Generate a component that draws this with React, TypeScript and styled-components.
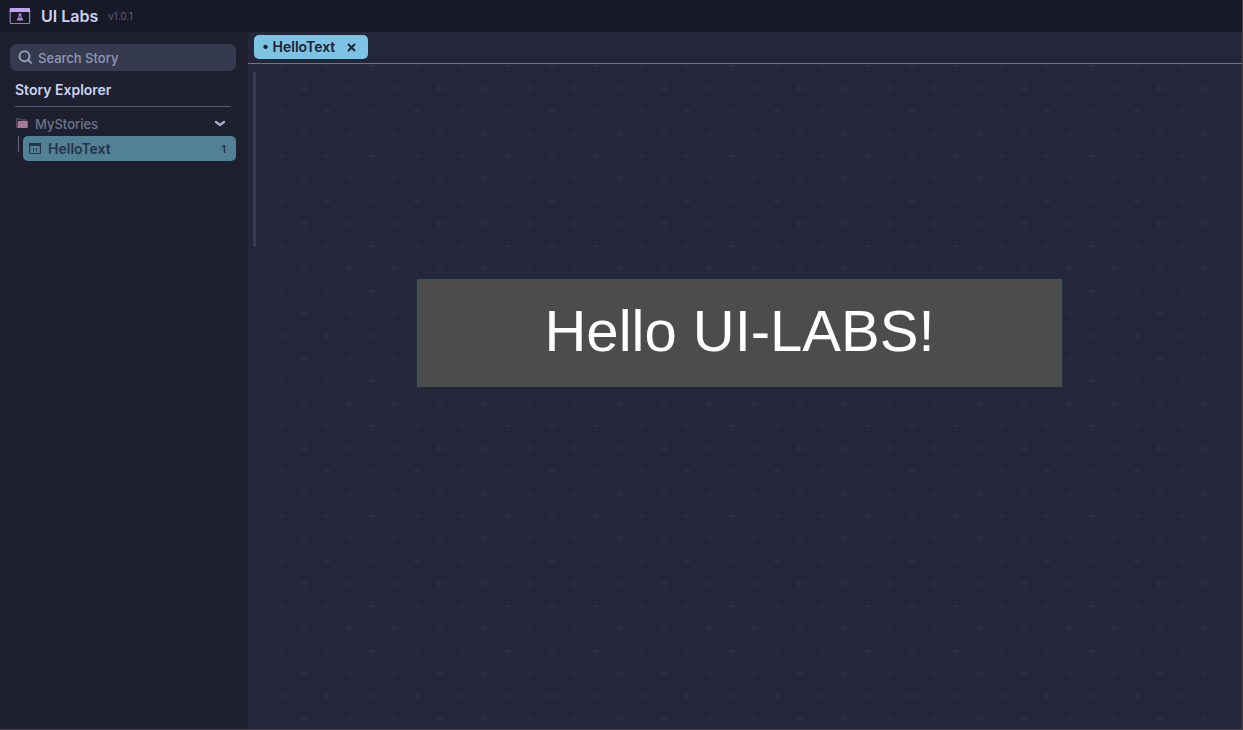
import React from 'react';
import styled, { createGlobalStyle } from 'styled-components';

const Global = createGlobalStyle`
  * { box-sizing: border-box; }
  body { margin: 0; background: #24273a; font-family: Inter, 'Liberation Sans', sans-serif; }
  button, input { font: inherit; border: 0; margin: 0; }
  button { cursor: pointer; }
`;

const Window = styled.div`
  min-height: 100vh;
  display: flex;
  flex-direction: column;
  border-right: 1px solid #474348;
  border-bottom: 1px solid #474348;
`;

const TitleBar = styled.header`
  height: 32px;
  flex: none;
  display: flex;
  align-items: center;
  padding: 0 9px;
  background: #181926;
`;

const AppName = styled.h1`
  margin: 0 10px;
  font-size: 16px;
  line-height: 20px;
  font-weight: 600;
  color: #cad3f5;
`;

const Version = styled.span`
  font-size: 10px;
  line-height: 20px;
  color: #5e6178;
`;

const Body = styled.div`
  flex: 1;
  display: flex;
`;

const Sidebar = styled.aside`
  width: 248px;
  flex: none;
  padding: 12px 12px 12px 10px;
  background: #1e2030;
`;

const SearchBox = styled.label`
  height: 27px;
  display: flex;
  align-items: center;
  gap: 5px;
  padding: 0 8px;
  border-radius: 7px;
  background: #363a4f;
`;

const SearchInput = styled.input`
  flex: 1;
  min-width: 0;
  padding: 0;
  background: transparent;
  outline: none;
  font-size: 13px;
  line-height: 20px;
  font-weight: 500;
  color: #cad3f5;
  &::placeholder { color: #9298b6; opacity: 1; }
`;

const SectionTitle = styled.h2`
  height: 36px;
  margin: 0 5px 4px;
  padding-top: 9px;
  border-bottom: 1px solid #55586e;
  font-size: 14px;
  line-height: 20px;
  font-weight: 600;
  color: #cad3f5;
`;

const Folder = styled.button`
  width: 100%;
  height: 25px;
  display: flex;
  align-items: center;
  gap: 7px;
  padding: 0 10px 0 6px;
  background: transparent;
  font-size: 13px;
  line-height: 20px;
  font-weight: 500;
  color: #6e738d;
`;

const Label = styled.span`
  flex: 1;
  text-align: left;
`;

const Branch = styled.div`
  display: flex;
  gap: 4px;
  padding-left: 8px;
`;

const BranchLine = styled.div`
  width: 1px;
  height: 16px;
  background: #62657c;
`;

const Story = styled.button`
  flex: 1;
  height: 25px;
  display: flex;
  align-items: center;
  gap: 7px;
  padding: 0 10px 0 6px;
  border-radius: 5px;
  background: #528195;
  font-size: 14px;
  line-height: 20px;
  font-weight: 600;
  color: #273447;
`;

const Count = styled.span`
  font-size: 11px;
`;

const Main = styled.main`
  flex: 1;
  min-width: 0;
  display: flex;
  flex-direction: column;
  background: #24273a;
`;

const Tabs = styled.nav`
  height: 32px;
  flex: none;
  padding: 3px 6px;
  border-bottom: 1px solid #6e738d;
`;

const Tab = styled.div`
  width: 114px;
  height: 24px;
  display: flex;
  align-items: center;
  justify-content: space-between;
  padding: 0 11px 0 8px;
  border-radius: 5px;
  background: #7dc4e4;
  color: #1e2030;
`;

const TabName = styled.button`
  padding: 0;
  background: transparent;
  font-size: 14px;
  line-height: 20px;
  font-weight: 600;
  white-space: pre;
  color: inherit;
`;

const Close = styled.button`
  display: flex;
  padding: 0;
  background: transparent;
  color: inherit;
`;

const Canvas = styled.section`
  flex: 1;
  position: relative;
  display: flex;
  align-items: flex-start;
  padding: 8px 19px 8px 5px;
`;

const Backdrop = styled.svg`
  position: absolute;
  inset: 0;
  width: 100%;
  height: 100%;
  mask-image: linear-gradient(to right, transparent, #000 36px, #000 calc(100% - 36px), transparent);
`;

const Handle = styled.div`
  position: relative;
  width: 3px;
  height: 175px;
  background: #363a4f;
`;

const Stage = styled.div`
  position: relative;
  flex: 1;
  display: flex;
  justify-content: center;
  padding-top: 207px;
`;

const Hello = styled.div`
  width: 645px;
  max-width: 90%;
  padding: 18px 0 22px;
  background: #4c4c4c;
  box-shadow: 0 0 0 1px #202e3c;
  font-family: 'Liberation Sans', Arial, sans-serif;
  font-size: 58px;
  line-height: 68px;
  text-align: center;
  color: #fff;
`;

export default function App() {
  return (
    <Window>
      <Global />
      <TitleBar>
        <svg width="22" height="18" viewBox="0 0 22 18" aria-hidden="true">
          <rect x="1.2" y="1.5" width="19.4" height="15" rx="1" fill="none" stroke="#9b7bbf" strokeWidth="1.2" />
          <path d="M1.8 1h18.2a1 1 0 0 1 1 1v3H.8V2a1 1 0 0 1 1-1z" fill="#c6a0f6" />
          <path d="M9.6 6.6h2.8v2.9l1.8 3.2c.2.5 0 .8-.5.8H8.3c-.5 0-.7-.3-.5-.8l1.8-3.2z" fill="#a884d0" />
          <path d="M10.2 9.6h1.6l.5 1.1H9.7z" fill="#43365c" />
        </svg>
        <AppName>UI Labs</AppName>
        <Version>v1.0.1</Version>
      </TitleBar>
      <Body>
        <Sidebar>
          <SearchBox>
            <svg width="15" height="15" viewBox="0 0 15 15" fill="none" stroke="#9298b6" strokeWidth="2" strokeLinecap="round" aria-hidden="true">
              <circle cx="6.5" cy="6.3" r="5" />
              <path d="M10.3 10.1l2.7 2.6" />
            </svg>
            <SearchInput type="text" placeholder="Search Story" aria-label="Search Story" />
          </SearchBox>
          <SectionTitle>Story Explorer</SectionTitle>
          <Folder aria-expanded="true">
            <svg width="12" height="11" viewBox="0 0 12 11" aria-hidden="true">
              <path d="M1.2 9.3H.8V.8h3.6l1 1.2h4.8v1" fill="none" stroke="#79586f" />
              <path d="M2.6 3H11a.8.8 0 0 1 .8.8v5.4a.8.8 0 0 1-.8.8H2.2a.8.8 0 0 1-.8-.8l.5-5.5a.8.8 0 0 1 .7-.7z" fill="#a47991" />
            </svg>
            <Label>MyStories</Label>
            <svg width="12" height="8" viewBox="0 0 12 8" aria-hidden="true">
              <path d="M2 2l4 3 4-3" fill="none" stroke="#a5adcb" strokeWidth="2.5" strokeLinecap="round" />
            </svg>
          </Folder>
          <Branch>
            <BranchLine />
            <Story>
              <svg width="12" height="11" viewBox="0 0 12 11" aria-hidden="true">
                <rect x="0.7" y="0.7" width="10.8" height="9.8" rx="0.5" fill="none" stroke="#273447" strokeWidth="1.2" />
                <path d="M0 0h12v3H0z" fill="#273447" />
                <path d="M4.5 5v3.5M7.5 5v3.5" stroke="#273447" />
              </svg>
              <Label>HelloText</Label>
              <Count>1</Count>
            </Story>
          </Branch>
        </Sidebar>
        <Main>
          <Tabs>
            <Tab>
              <TabName>• HelloText</TabName>
              <Close aria-label="Close HelloText">
                <svg width="11" height="11" viewBox="0 0 11 11" aria-hidden="true">
                  <path d="M2 2l7 7M9 2L2 9" stroke="currentColor" strokeWidth="1.9" />
                </svg>
              </Close>
            </Tab>
          </Tabs>
          <Canvas>
            <Backdrop aria-hidden="true">
              <defs>
                <pattern id="crosses" x="23" y="-9" width="45" height="45" patternUnits="userSpaceOnUse">
                  <path d="M6.5 11h9M11 6.5v9M29 33.5h9M33.5 29v9" stroke="#2a2d40" strokeWidth="1.8" />
                </pattern>
              </defs>
              <rect width="100%" height="100%" fill="url(#crosses)" />
            </Backdrop>
            <Handle />
            <Stage>
              <Hello>Hello UI-LABS!</Hello>
            </Stage>
          </Canvas>
        </Main>
      </Body>
    </Window>
  );
}
